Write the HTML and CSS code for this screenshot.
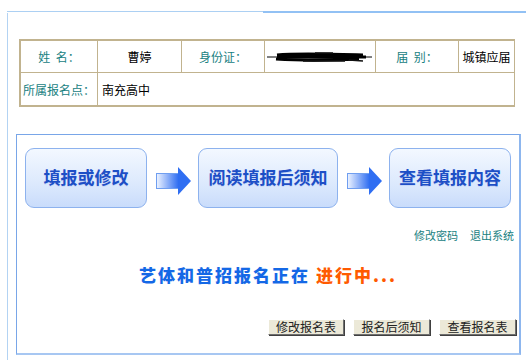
FILE: index.html
```html
<!DOCTYPE html>
<html lang="zh">
<head>
<meta charset="utf-8">
<title>报名</title>
<link rel="stylesheet" href="styles.css">
</head>
<body>
<div class="topbar"><span class="seg1"></span><span class="seg2"></span></div>
<div class="frame">
  <div class="info">
    <div class="lbl">姓&nbsp;&nbsp;名：</div>
    <div class="val center">曹婷</div>
    <div class="lbl">身份证：</div>
    <div class="val center">
      <svg class="redact" width="106" height="12" viewBox="0 0 106 12">
        <path d="M0 6 L105 6" stroke="#000" stroke-width="1"/>
        <path d="M10 4 C30 2 60 3 96 4 M9 8 C40 10 70 9 92 8 M10 6 C40 5 70 6 99 6" stroke="#000" stroke-width="3.2" fill="none"/>
        <path d="M48 2 L66 2 M36 10 L78 10 M82 9 L96 10" stroke="#111" stroke-width="1.5"/>
      </svg>
    </div>
    <div class="lbl">届&nbsp;&nbsp;别：</div>
    <div class="val center">城镇应届</div>
    <div class="lbl">所属报名点：</div>
    <div class="val span">南充高中</div>
  </div>

  <div class="panel">
    <div class="steps">
      <div class="step w1">填报或修改</div>
      <svg class="arrow" width="35" height="28" viewBox="0 0 35 28">
        <defs>
          <linearGradient id="ag" x1="0" y1="0" x2="1" y2="0">
            <stop offset="0" stop-color="#eef4ff"/>
            <stop offset="1" stop-color="#2f6ef2"/>
          </linearGradient>
        </defs>
        <rect x="0.5" y="6.5" width="22" height="15" fill="url(#ag)" stroke="#6f9ef0" stroke-width="1"/>
        <polygon points="22,0 35,14 22,28" fill="#2f6ef2"/>
      </svg>
      <div class="step w2">阅读填报后须知</div>
      <svg class="arrow" width="35" height="28" viewBox="0 0 35 28">
        <rect x="0.5" y="6.5" width="22" height="15" fill="url(#ag)" stroke="#6f9ef0" stroke-width="1"/>
        <polygon points="22,0 35,14 22,28" fill="#2f6ef2"/>
      </svg>
      <div class="step w1">查看填报内容</div>
    </div>
    <div class="links"><a href="#">修改密码</a><a href="#">退出系统</a></div>
    <div class="status"><span class="blue">艺体和普招报名正在</span> <span class="orange">进行中...</span></div>
    <div class="btns">
      <button class="btn b1">修改报名表</button>
      <button class="btn b2">报名后须知</button>
      <button class="btn b2">查看报名表</button>
    </div>
  </div>
</div>
</body>
</html>
```

FILE: styles.css
```css
html, body {
  margin: 0;
  padding: 0;
  background: #fff;
}
body {
  font-family: "Noto Sans CJK SC", "Liberation Sans", sans-serif;
  font-size: 12px;
  color: #000;
  overflow: hidden;
}
.topbar {
  display: flex;
  align-items: flex-start;
  margin: 11px 0 0 7px;
  height: 2px;
}
.seg1 {
  width: 256px;
  height: 1px;
  background: #acd0f3;
}
.seg2 {
  flex: 1;
  height: 2px;
  background: #92c1f4;
}
.frame {
  margin-left: 7px;
  border-left: 1px solid #b3d3f3;
  height: 347px;
  padding-top: 26px;
  box-sizing: border-box;
}
.info {
  margin-left: 11px;
  width: 496px;
  box-sizing: border-box;
  display: grid;
  grid-template-columns: 76px 83px 82px 110px 82px 55px;
  grid-template-rows: 31px 32px;
  gap: 1px;
  background: #c1b38f;
  border: 2px solid #c1b38f;
}
.info > div {
  background: #fff;
  display: flex;
  align-items: center;
}
.lbl {
  justify-content: center;
  color: #18817f;
}
.val.center {
  justify-content: center;
}
.val.span {
  grid-column: 2 / 7;
  padding-left: 4px;
}
.redact {
  display: block;
}
.panel {
  margin: 27px 0 0 8px;
  width: 505px;
  height: 221px;
  box-sizing: border-box;
  border-top: 1px solid #79a6e8;
  border-left: 1px solid #79a6e8;
  border-right: 2px solid #8db6ee;
  border-bottom: 2px solid #a7c7f2;
  padding-top: 13px;
}
.steps {
  display: flex;
  align-items: center;
  padding-left: 8px;
}
.step {
  height: 60px;
  box-sizing: border-box;
  border: 1px solid #8db2ee;
  border-radius: 9px;
  background: linear-gradient(#f3f8ff, #dce9fd 60%, #c9dcfb);
  display: flex;
  align-items: center;
  justify-content: center;
  font-family: "Noto Sans CJK SC", sans-serif;
  font-weight: 700;
  font-size: 17px;
  color: #1d4fc6;
  padding-bottom: 4px;
  text-shadow: 0 1px 0 #c8d8f8;
}
.w1 { width: 122px; }
.w2 { width: 140px; }
.arrow {
  display: block;
  margin: 6px 7px 0 9px;
}
.links {
  display: flex;
  justify-content: flex-end;
  gap: 12px;
  padding-right: 5px;
  margin-top: 20px;
  line-height: 15px;
  font-size: 11px;
}
.links a {
  color: #18817f;
  text-decoration: none;
}
.status {
  margin-top: 20px;
  text-align: center;
  font-size: 17px;
  font-weight: 900;
  line-height: 24px;
  letter-spacing: 2px;
}
.blue { color: #1468e6; }
.orange { color: #ff5a00; }
.btns {
  display: flex;
  justify-content: flex-end;
  gap: 9px;
  margin-top: 32px;
  padding-right: 3px;
}
.btn {
  height: 16px;
  padding: 0;
  margin: 0;
  font-family: "Noto Sans CJK SC", sans-serif;
  font-size: 12px;
  line-height: 14px;
  color: #222;
  background: #ece9d8;
  border: 1px solid;
  border-color: #fff #6f6f6f #6f6f6f #fff;
  box-shadow: 1px 1px 0 #404040;
}
.b1 { width: 76px; }
.b2 { width: 77px; }
```
